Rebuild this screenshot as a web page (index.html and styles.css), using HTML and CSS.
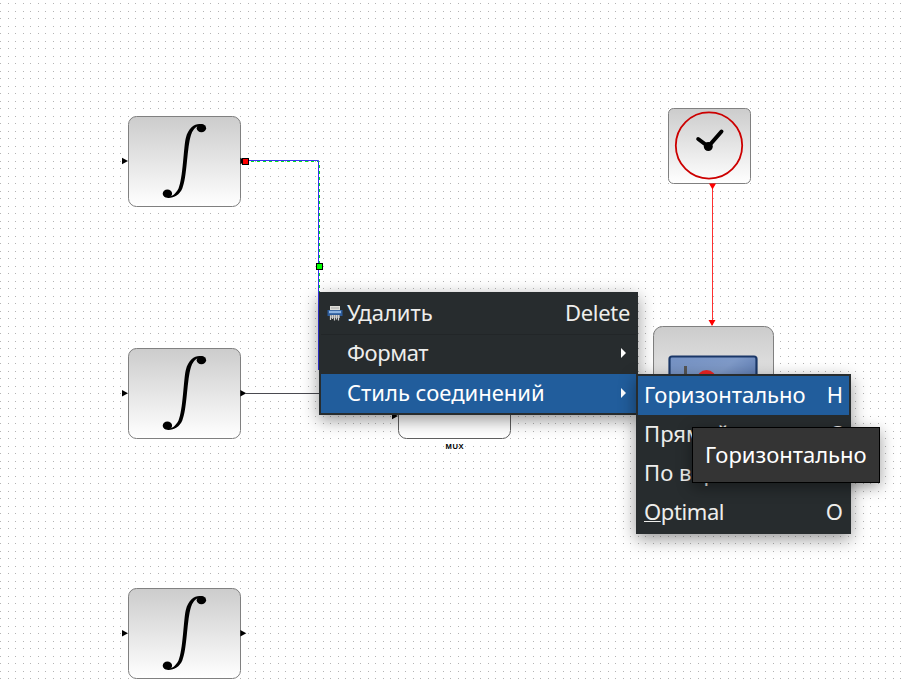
FILE: index.html
```
<!DOCTYPE html>
<html lang="ru">
<head>
<meta charset="utf-8">
<title>Diagram</title>
<link rel="stylesheet" href="styles.css">
</head>
<body>
<main class="editor">
  <svg class="diagram" width="906" height="685" viewBox="0 0 906 685">
    <defs>
      <pattern id="grid" width="15" height="15" patternUnits="userSpaceOnUse">
        <path d="M0 3h1v1h-1zM8 3h1v1h-1zM0 11h1v1h-1zM8 11h1v1h-1z" fill="#b4b4b4"/>
      </pattern>
      <linearGradient id="shade" x1="0" y1="0" x2="0" y2="1">
        <stop offset="0" stop-color="#cccccc"/>
        <stop offset="1" stop-color="#ffffff"/>
      </linearGradient>
      <linearGradient id="screen" x1="0" y1="0" x2="1" y2="1">
        <stop offset="0" stop-color="#7592c4"/>
        <stop offset=".4" stop-color="#7f9ac8"/>
        <stop offset="1" stop-color="#2c4f92"/>
      </linearGradient>
      <g id="port"><path d="M0 -3.2V3.2L6 0z"/></g>
      <g id="integral">
        <rect x=".5" y=".5" width="112" height="90" rx="8" fill="url(#shade)" stroke="#808080"/>
        <ellipse cx="73.4" cy="12.200" rx="4.700" ry="4.100"/>
        <ellipse cx="39.4" cy="77.700" rx="4.700" ry="4.100"/>
        <path d="M76 9.200C70 6 61 9.500 57.800 22C55.500 32 55 62 50.500 72.500C47.500 78 44 80.800 39.500 80.700L39.500 81.900C46 82.200 51.500 79 54.300 72.500C58.800 62 59 35 62.200 22C64.500 12 70 8.500 74 9.800z"/>
      </g>
    </defs>
    <rect width="902" height="680" fill="url(#grid)"/>

    <use href="#integral" x="128" y="116"/>
    <use href="#integral" x="128" y="348"/>
    <use href="#integral" x="128" y="588"/>
    <use href="#port" x="122" y="161"/>
    <use href="#port" x="122" y="393.3"/>
    <use href="#port" x="122" y="633.3"/>
    <use href="#port" x="240.300" y="161"/>
    <use href="#port" x="240.300" y="393.3"/>
    <use href="#port" x="240.300" y="633.3"/>

    <path d="M246 393.500H398" stroke="#4a4a50" fill="none"/>
    <path d="M251 161.500H319.500V292" stroke="#00e020" stroke-dasharray="3 3" fill="none"/>
    <path d="M246 160.500H318.500V370" stroke="#3535f0" fill="none"/>
    <rect x="242.500" y="158.500" width="6" height="6" fill="#ff0000" stroke="#000"/>
    <rect x="316.500" y="263.500" width="6" height="6" fill="#00ff00" stroke="#000"/>

    <rect x="398.500" y="348.500" width="112" height="90" rx="8" fill="#fff" stroke="#606060"/>
    <use href="#port" x="392" y="416"/>
    <text class="mux" x="445.500" y="449" textLength="18">MUX</text>

    <rect x="668.500" y="108.500" width="82" height="75" rx="5" fill="url(#shade)" stroke="#808080"/>
    <circle cx="709" cy="145.500" r="33.200" fill="none" stroke="#cc0000" stroke-width="1.800"/>
    <path d="M698.200 139L708.300 146.500L721.500 131.500" fill="none" stroke="#000" stroke-width="4" stroke-linecap="round"/>
    <circle cx="708.300" cy="146.500" r="4.500"/>
    <path d="M712.500 184V325" stroke="#ff3030"/>
    <path d="M709 183.500h7l-3.500 6zM708.500 320h7l-3.500 6z" fill="#ff0000"/>

    <rect x="653.500" y="326.500" width="120" height="112" rx="9" fill="url(#shade)" stroke="#808080"/>
    <rect x="669.500" y="356.500" width="87" height="70" rx="2.500" fill="url(#screen)" stroke="#1a3768" stroke-width="2.200"/>
    <path d="M685.500 366v50" stroke="#555" stroke-width="3"/>
    <circle cx="706.500" cy="380" r="10" fill="#ee2424"/>
  </svg>

  <ul class="menu menu-main">
    <li class="item">
      <svg class="icon" viewBox="0 0 16 16">
        <path d="M3 1h10v4H3z" fill="#deded8"/><path d="M4 3h8" stroke="#aaa"/>
        <path d="M.5 5h15v6H.5z" fill="#2d5c9c"/><path d="M2 7h12" stroke="#8db4e2" stroke-width="2.400"/>
        <path d="M3 10h10v3H3z" fill="#8c9094"/>
        <path d="M3.500 10.500v4.500M5.500 10v4M7.500 10v5.500M9.500 10v4.500M11.500 10v5.500" stroke="#d0d0d0" stroke-width="1.200"/>
      </svg>
      <span class="label">Удалить</span><span class="key delete">Delete</span>
    </li>
    <li class="item"><span class="label format">Формат</span><i class="arrow"></i></li>
    <li class="item active"><span class="label">Стиль соединений</span><i class="arrow"></i></li>
  </ul>

  <ul class="menu menu-sub">
    <li class="item active"><span class="label">Горизонтально</span><span class="key">H</span></li>
    <li class="item"><span class="label">Прямой</span><span class="key">S</span></li>
    <li class="item"><span class="label">По вертикали</span><span class="key">V</span></li>
    <li class="item"><span class="label optimal"><u>O</u>ptimal</span><span class="key">O</span></li>
  </ul>

  <div class="tooltip">Горизонтально</div>
</main>
</body>
</html>
```
FILE: styles.css
```
body { margin: 0; background: #fff; overflow: hidden; }

.editor {
  position: relative;
  width: 906px;
  height: 685px;
  overflow: hidden;
  font: 22px/30px "Noto Sans", sans-serif;
}

.diagram { display: block; }

.mux { font: bold 7.6px "Liberation Sans", sans-serif; }

.menu {
  position: absolute;
  box-sizing: border-box;
  margin: 0;
  padding: 2px;
  list-style: none;
  background: #272c2e;
  color: #eeeeec;
  box-shadow: 0 5px 16px rgba(0, 0, 0, .42);
}

.menu-main { left: 319px; top: 292px; width: 319px; height: 123px; }
.menu-sub { left: 636px; top: 374px; width: 215px; height: 160px; }

.item {
  display: flex;
  align-items: center;
  box-sizing: border-box;
  height: 39px;
  padding: 0 6px 4px;
  white-space: nowrap;
}

.menu-main .item { position: relative; height: 40px; padding-left: 26px; }
.menu-main .item:nth-child(2) { padding-bottom: 5px; box-shadow: inset 0 1px #222628; }
.menu-main .item.active { height: 39px; }
.active { background: #215d9c; color: #fff; }
.label { flex: 1; }
.delete { letter-spacing: -.3px; }
.format { letter-spacing: -.4px; }
.optimal { letter-spacing: -.4px; }

.icon { position: absolute; left: 6px; top: 11px; width: 16px; height: 16px; }

.arrow {
  width: 0;
  height: 0;
  margin: 2px 4px 0 0;
  border: solid transparent;
  border-width: 5px 0 5px 5px;
  border-left-color: #fff;
}

u { text-decoration-thickness: 1px; text-underline-offset: 1px; }

.tooltip {
  position: absolute;
  left: 692px;
  top: 427px;
  box-sizing: border-box;
  width: 188px;
  height: 56px;
  padding: 11px 12px;
  border: 1px solid #000;
  background: #343434;
  color: #fff;
  box-shadow: 0 4px 14px rgba(0, 0, 0, .4);
  white-space: nowrap;
}
```
